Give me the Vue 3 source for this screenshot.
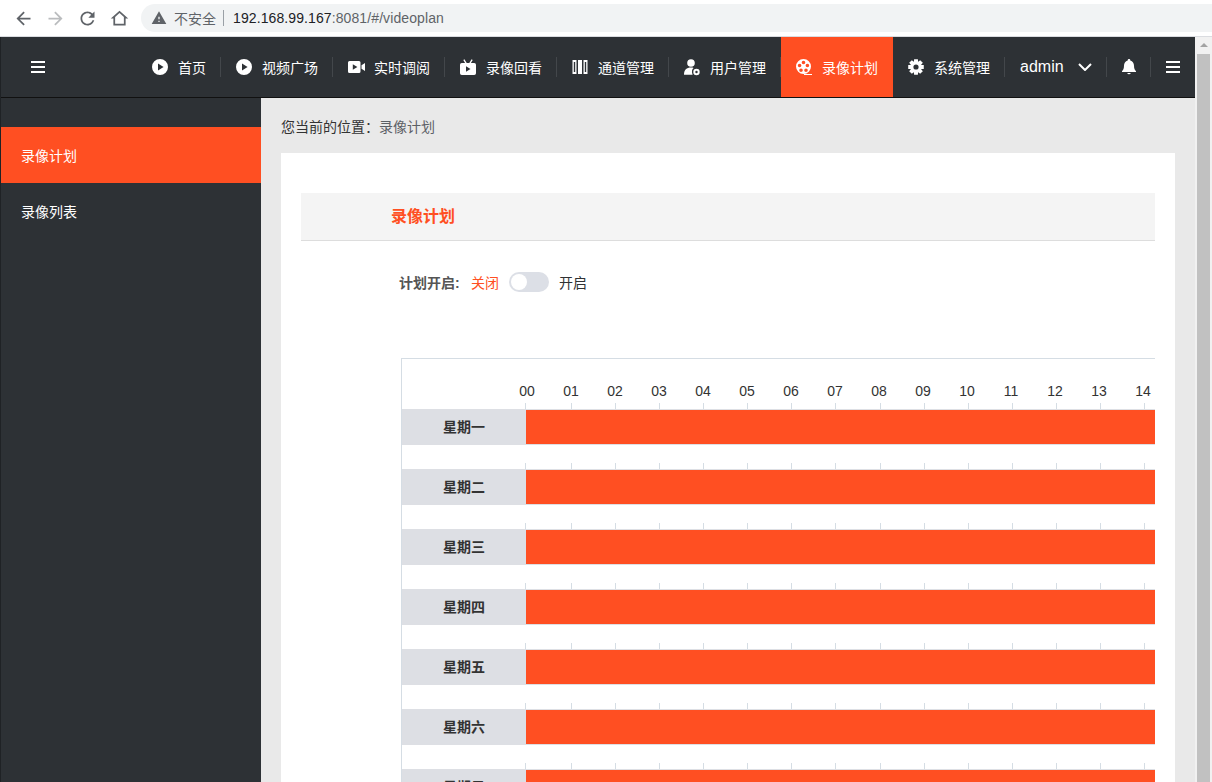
<script setup>
import { ref } from 'vue'

// circle as a sub path, so icons can punch holes with evenodd
const dot = (cx, cy, r) => `M${cx - r} ${cy}a${r} ${r} 0 1 0 ${r * 2} 0a${r} ${r} 0 1 0 ${-r * 2} 0z`

function gearPath() {
  let d = ''
  for (let i = 0; i < 8; i++) {
    const a = (i / 8) * Math.PI * 2
    const pts = [[-0.38, 5.6], [-0.24, 8], [0.24, 8], [0.38, 5.6]].map(([o, r]) => {
      return `${(8 + Math.sin(a + o) * r).toFixed(2)} ${(8 - Math.cos(a + o) * r).toFixed(2)}`
    })
    d += (i === 0 ? 'M' : 'L') + pts.join('L')
  }
  return d + 'z' + dot(8, 8, 2.6)
}

const playIcon = 'M8 0a8 8 0 1 0 0 16A8 8 0 0 0 8 0zM6 4.4L11.6 8 6 11.6z'
const videoIcon = 'M1.5 2h9.5A1.5 1.5 0 0 1 12.500 3.500v9A1.500 1.500 0 0 1 11 14H1.500A1.500 1.500 0 0 1 0 12.500v-9A1.500 1.500 0 0 1 1.500 2zM4.800 5.200v5.600L9.400 8zM13.500 6.300L17 4v8l-3.500-2.300z'
const tvIcon = 'M1.800 4h3.300L3.300 1l1.100-.7L6.700 4h2.600L11.600.3l1.100.7L10.900 4h3.300A1.800 1.800 0 0 1 16 5.800v8.400a1.800 1.800 0 0 1-1.800 1.800H1.800A1.800 1.800 0 0 1 0 14.200V5.800A1.800 1.800 0 0 1 1.800 4zM6 7.200v5.600L10.500 10z'
const bookIcon = 'M.5 1h4v14h-4zM1.800 3v10h1.400V3zM6 1h4v14H6zM11.500 1h4v14h-4zM12.800 3v10h1.400V3z'
const userIcon = dot(7, 4, 3.8) + 'M0 15.800C0 11 2.600 8.600 7 8.600c1 0 1.900.1 2.600.4C8 10 7.400 12.500 8.600 15.800z' + dot(12.500, 13, 3.200) + dot(12.500, 13, 1.200)
const filmIcon = dot(7.500, 7.500, 7.500) + dot(7.500, 3.500, 1.800) + dot(3.600, 6.500, 1.800) + dot(11.400, 6.500, 1.800) + dot(5, 11.300, 1.800) + dot(10, 11.300, 1.800) + 'M8 15h8v1H8z'
const bellIcon = 'M8 0a1.300 1.300 0 0 0-1.300 1.400C4.300 2 3 4 3 6.800c0 3-.9 4.300-2 5.400v.8h14v-.8c-1.100-1.100-2-2.400-2-5.400C13 4 11.700 2 9.300 1.400A1.300 1.300 0 0 0 8 0zM6.200 14a1.900 1.900 0 0 0 3.600 0z'

const navItems = ref([
  { name: '首页', icon: playIcon },
  { name: '视频广场', icon: playIcon },
  { name: '实时调阅', icon: videoIcon },
  { name: '录像回看', icon: tvIcon },
  { name: '通道管理', icon: bookIcon },
  { name: '用户管理', icon: userIcon },
  { name: '录像计划', icon: filmIcon, active: true },
  { name: '系统管理', icon: gearPath() }
])

const sideItems = ref([
  { name: '录像计划', active: true },
  { name: '录像列表' }
])

const hours = Array.from({ length: 24 }, (_, i) => String(i).padStart(2, '0'))
const days = ['星期一', '星期二', '星期三', '星期四', '星期五', '星期六', '星期日']
</script>

<template>
  <div class="window">
    <div class="toolbar">
      <button class="tool">
        <svg viewBox="0 0 24 24"><path d="M20 11H7.830l5.590-5.590L12 4l-8 8 8 8 1.410-1.410L7.830 13H20v-2z" /></svg>
      </button>
      <button class="tool off">
        <svg viewBox="0 0 24 24"><path d="M4 11h12.170l-5.590-5.590L12 4l8 8-8 8-1.410-1.410L16.170 13H4v-2z" /></svg>
      </button>
      <button class="tool">
        <svg viewBox="0 0 24 24"><path d="M17.650 6.350C16.200 4.900 14.210 4 12 4c-4.420 0-7.990 3.580-7.990 8s3.570 8 7.990 8c3.730 0 6.840-2.550 7.730-6h-2.080c-.82 2.330-3.040 4-5.650 4-3.310 0-6-2.690-6-6s2.690-6 6-6c1.660 0 3.140.69 4.220 1.780L13 11h7V4l-2.350 2.350z" /></svg>
      </button>
      <button class="tool">
        <svg viewBox="0 0 24 24"><path fill-rule="evenodd" d="M12 3L2 12h3v8h14v-8h3L12 3zm0 2.700l5 4.500V18H7v-7.800l5-4.500z" /></svg>
      </button>
      <div class="omnibox">
        <svg class="warn" viewBox="0 0 24 24"><path fill-rule="evenodd" d="M1 21h22L12 2 1 21zm12-3h-2v-2h2v2zm0-4h-2v-4h2v4z" /></svg>
        <span class="insecure">不安全</span>
        <span class="omni-sep"></span>
        <span class="url"><b>192.168.99.167</b>:8081/#/videoplan</span>
      </div>
    </div>

    <div class="viewport">
      <div class="page">
        <header class="topbar">
          <span class="burger left-burger"><i></i><i></i><i></i></span>
          <nav class="nav">
            <a v-for="item in navItems" :key="item.name" class="nav-item" :class="{ active: item.active }">
              <svg class="nav-icon" viewBox="0 0 16 16"><path fill-rule="evenodd" :d="item.icon" /></svg>
              <span>{{ item.name }}</span>
            </a>
            <a class="nav-item user">
              <span class="username">admin</span>
              <svg class="chevron" viewBox="0 0 14 8"><path d="M1 1l6 6 6-6" /></svg>
            </a>
            <a class="nav-item square">
              <svg class="nav-icon" viewBox="0 0 16 16"><path fill-rule="evenodd" :d="bellIcon" /></svg>
            </a>
            <a class="nav-item square last">
              <span class="burger"><i></i><i></i><i></i></span>
            </a>
          </nav>
        </header>

        <div class="body">
          <aside class="sidebar">
            <div v-for="item in sideItems" :key="item.name" class="side-item" :class="{ active: item.active }">
              {{ item.name }}
            </div>
          </aside>

          <main class="main">
            <div class="crumb">您当前的位置：<span class="crumb-now">录像计划</span></div>
            <section class="card">
              <h2 class="card-title">录像计划</h2>
              <div class="switch-row">
                <span class="switch-label">计划开启:</span>
                <span class="off-text">关闭</span>
                <span class="switch"><i></i></span>
                <span class="on-text">开启</span>
              </div>
              <div class="plan">
                <div class="hours">
                  <span v-for="h in hours" :key="h" class="hour">{{ h }}</span>
                </div>
                <div v-for="day in days" :key="day" class="day">
                  <div class="ticks">
                    <span v-for="h in hours" :key="h" class="tick"></span>
                  </div>
                  <div class="day-row">
                    <div class="day-name">{{ day }}</div>
                    <div class="day-bar"></div>
                  </div>
                </div>
              </div>
            </section>
          </main>
        </div>
      </div>

      <div class="scrollbar">
        <span class="arrow"></span>
        <span class="thumb"></span>
      </div>
    </div>
  </div>
</template>

<style scoped>
.window {
  height: 782px;
  display: flex;
  flex-direction: column;
  overflow: hidden;
  font-family: "Liberation Sans", "Noto Sans CJK SC", sans-serif;
  font-size: 14px;
  color: #333;
}

/* browser chrome */
.toolbar {
  flex: none;
  height: 36px;
  border-bottom: 1px solid #dadce0;
  background: #fff;
  display: flex;
  align-items: center;
  padding-left: 7px;
}

.tool {
  width: 32px;
  height: 32px;
  padding: 0;
  border: 0;
  background: none;
  display: flex;
  align-items: center;
  justify-content: center;
}

.tool svg {
  width: 21px;
  height: 21px;
  fill: #5f6368;
}

.tool.off svg {
  fill: #babcbe;
}

.omnibox {
  flex: 1;
  height: 28px;
  margin-left: 6px;
  padding-left: 10px;
  border-radius: 14px 0 0 14px;
  background: #f1f3f4;
  display: flex;
  align-items: center;
}

.warn {
  width: 16px;
  height: 16px;
  fill: #5f6368;
}

.insecure {
  margin-left: 7px;
  color: #5f6368;
}

.omni-sep {
  width: 1px;
  height: 16px;
  margin: 0 9px 0 7px;
  background: #9aa0a6;
}

.url {
  color: #5f6368;
  letter-spacing: 0.1px;
}

.url b {
  font-weight: 400;
  color: #202124;
}

.viewport {
  flex: 1;
  min-height: 0;
  display: flex;
}

.page {
  flex: 1;
  min-width: 0;
  display: flex;
  flex-direction: column;
  border-left: 1px solid #1f2225;
  background: #e9e9e9;
}

/* app header */
.topbar {
  flex: none;
  height: 60px;
  border-bottom: 1px solid #111;
  background: #2d3135;
  display: flex;
  align-items: center;
  color: #fff;
}

.burger {
  width: 14px;
  height: 12px;
  display: flex;
  flex-direction: column;
  justify-content: space-between;
}

.burger i {
  height: 2px;
  background: #fff;
}

.left-burger {
  margin-left: 30px;
}

.nav {
  margin-left: auto;
  height: 100%;
  display: flex;
}

.nav-item {
  position: relative;
  padding: 0 15px;
  display: flex;
  align-items: center;
  gap: 10px;
  color: #fff;
  white-space: nowrap;
}

.nav-item::after {
  content: "";
  position: absolute;
  right: 0;
  top: 20px;
  width: 1px;
  height: 20px;
  background: #43474b;
}

.nav-item.last::after {
  display: none;
}

.nav-item.active {
  background: #ff4f22;
}

.nav-item.active::after {
  display: none;
}

.nav-icon {
  flex: none;
  width: 16px;
  height: 16px;
  fill: #fff;
  overflow: visible;
}

.user {
  gap: 14px;
}

.username {
  font-size: 16px;
  width: 44px;
}

.chevron {
  width: 14px;
  height: 8px;
  fill: none;
  stroke: #fff;
  stroke-width: 2;
}

.square {
  width: 44px;
  padding: 0;
  justify-content: center;
}

/* below the header */
.body {
  flex: 1;
  min-height: 0;
  display: flex;
}

.sidebar {
  flex: none;
  width: 260px;
  padding-top: 29px;
  background: #2d3135;
}

.side-item {
  height: 56px;
  padding-left: 20px;
  display: flex;
  align-items: center;
  color: #fff;
}

.side-item.active {
  background: #ff4f22;
}

.main {
  flex: 1;
  min-width: 0;
  padding: 0 20px;
}

.crumb {
  height: 55px;
  padding-top: 19px;
  box-sizing: border-box;
  line-height: 20px;
  color: #333;
}

.crumb-now {
  color: #5c6066;
}

.card {
  padding: 40px 20px;
  background: #fff;
}

.card-title {
  height: 47px;
  margin: 0;
  padding-left: 90px;
  border-bottom: 1px solid #ddd;
  background: #f4f4f4;
  font-size: 16px;
  font-weight: 700;
  line-height: 48px;
  color: #ff4f22;
}

.switch-row {
  margin-top: 31px;
  padding-left: 98px;
  height: 20px;
  display: flex;
  align-items: center;
}

.switch-label {
  width: 72px;
  font-size: 14px;
  font-weight: 700;
  color: #555;
}

.off-text {
  color: #ff4f22;
}

.on-text {
  color: #303133;
}

.switch {
  width: 40px;
  height: 20px;
  margin: 0 10px;
  padding: 2px;
  box-sizing: border-box;
  border-radius: 10px;
  background: #dcdfe6;
}

.switch i {
  display: block;
  width: 16px;
  height: 16px;
  border-radius: 50%;
  background: #fff;
}

.plan {
  margin: 66px 0 0 100px;
  border-top: 1px solid #d5dde4;
  border-left: 1px solid #d5dde4;
  overflow: hidden;
}

.hours {
  height: 44px;
  box-sizing: border-box;
  padding: 22px 0 0 103px;
  display: flex;
}

.hour {
  flex: none;
  width: 44px;
  text-align: center;
  line-height: 20px;
  color: #333;
}

.day {
  height: 60px;
}

.ticks {
  height: 6px;
  padding-left: 123px;
  display: flex;
}

.tick {
  flex: none;
  width: 44.08px;
  box-sizing: border-box;
  border-left: 1px solid #d5dde4;
}

.tick:first-child {
  width: 46px;
}

.day-row {
  height: 36px;
  display: flex;
}

.day-name {
  flex: none;
  width: 124px;
  background: #dddfe4;
  text-align: center;
  font-weight: 700;
  line-height: 36px;
  color: #333;
}

.day-bar {
  flex: 1;
  border-top: 1px solid #dddfe4;
  border-bottom: 1px solid #dddfe4;
  background: #ff4f22;
}

/* browser scrollbar */
.scrollbar {
  flex: none;
  width: 17px;
  background: #f1f1f1;
  display: flex;
  flex-direction: column;
  align-items: center;
}

.arrow {
  margin-top: 6px;
  border-left: 4px solid transparent;
  border-right: 4px solid transparent;
  border-bottom: 4px solid #a3a3a3;
}

.thumb {
  flex: 1;
  width: 13px;
  margin-top: 7px;
  background: #c1c1c1;
}
</style>

<style>
html,
body {
  margin: 0;
  overflow: hidden;
}
</style>
